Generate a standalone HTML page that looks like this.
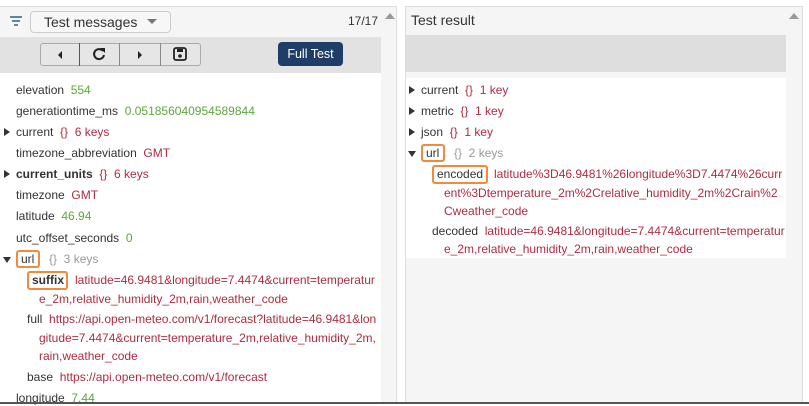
<!DOCTYPE html>
<html><head><meta charset="utf-8"><style>
*{box-sizing:border-box;margin:0;padding:0}
body{width:809px;height:404px;background:#fff;font-family:"Liberation Sans",Arial,sans-serif;font-size:12px;color:#333;position:relative;overflow:hidden}
.a{position:absolute;white-space:nowrap;line-height:16px}
.g{color:#5ba83e}.r{color:#ad2d40}.m{color:#999}
.tri{position:absolute;width:0;height:0}
.tr{border-left:6px solid #333;border-top:4px solid transparent;border-bottom:4px solid transparent}
.td{border-top:6px solid #333;border-left:4px solid transparent;border-right:4px solid transparent}
.box{position:absolute;border:2px solid #f08a3c;border-radius:3px}
</style></head><body>
<div style="position:absolute;left:0;top:6px;width:397px;height:397px;border:1px solid #ddd;border-left:none;background:#f5f5f5"></div>
<div style="position:absolute;left:0;top:7px;width:381px;height:30px;background:#f5f5f5"></div>
<div style="position:absolute;left:0;top:37px;width:381px;height:36px;background:#e2e2e2"></div>
<div style="position:absolute;left:0;top:73px;width:381px;height:330px;background:#fff"></div>
<div class="tri" style="left:385px;top:13px;border-bottom:6px solid #999;border-left:5px solid transparent;border-right:5px solid transparent"></div>
<svg style="position:absolute;left:9px;top:15px" width="14" height="12"><path d="M1 2h12M3 6h8M5 10h4" stroke="#2d5f8f" stroke-width="1.6"/></svg>
<div style="position:absolute;left:30px;top:11px;width:141px;height:22px;border:1px solid #ccc;border-radius:4px;background:#f7f7f7"></div>
<div class="a" style="left:44px;top:14px;font-size:14px">Test messages</div>
<div class="tri" style="left:147px;top:19px;border-top:5px solid #777;border-left:5px solid transparent;border-right:5px solid transparent"></div>
<div class="a" style="left:348px;top:13px">17/17</div>
<div style="position:absolute;left:40px;top:43px;width:161px;height:23px;border:1px solid #aaa;border-radius:3px;background:#e6e6e6"></div>
<div style="position:absolute;left:79px;top:43px;width:1px;height:23px;background:#555"></div>
<div style="position:absolute;left:119px;top:43px;width:1px;height:23px;background:#888"></div>
<div style="position:absolute;left:160px;top:43px;width:1px;height:23px;background:#888"></div>
<div class="tri" style="left:58px;top:51px;border-right:4px solid #222;border-top:4px solid transparent;border-bottom:4px solid transparent"></div>
<svg style="position:absolute;left:92px;top:47px" width="14" height="14"><path d="M11 4A5 5 0 1 0 12 8" fill="none" stroke="#222" stroke-width="2"/><path d="M8 1l5 0 0 5z" fill="#222"/></svg>
<div class="tri" style="left:138px;top:51px;border-left:4px solid #222;border-top:4px solid transparent;border-bottom:4px solid transparent"></div>
<svg style="position:absolute;left:173px;top:47px" width="14" height="14"><rect x="1" y="1" width="12" height="12" rx="2" fill="none" stroke="#222" stroke-width="1.8"/><rect x="4" y="2" width="6" height="3" fill="#222"/><circle cx="7" cy="9" r="1.8" fill="#222"/></svg>
<div style="position:absolute;left:278px;top:42px;width:65px;height:24px;background:#1f3d66;border-radius:4px;color:#fff;font-size:12.5px;line-height:24px;text-align:center">Full Test</div>

<div class="a" style="left:16px;top:82px">elevation <span class="g">&nbsp;554</span></div>
<div class="a" style="left:16px;top:103px">generationtime_ms <span class="g">&nbsp;0.051856040954589844</span></div>
<div class="tri tr" style="left:4px;top:128px"></div>
<div class="a" style="left:16px;top:124px">current &nbsp;<span class="r">{} &nbsp;6 keys</span></div>
<div class="a" style="left:16px;top:145px">timezone_abbreviation <span class="r">&nbsp;GMT</span></div>
<div class="tri tr" style="left:4px;top:170px"></div>
<div class="a" style="left:16px;top:166px"><b>current_units</b> &nbsp;<span class="r">{} &nbsp;6 keys</span></div>
<div class="a" style="left:16px;top:187px">timezone <span class="r">&nbsp;GMT</span></div>
<div class="a" style="left:16px;top:208px">latitude <span class="g">&nbsp;46.94</span></div>
<div class="a" style="left:16px;top:230px">utc_offset_seconds <span class="g">&nbsp;0</span></div>
<div class="tri td" style="left:3px;top:257px"></div>
<div class="box" style="left:16px;top:250px;width:24px;height:18px"></div>
<div class="a" style="left:21px;top:251px">url</div>
<div class="a m" style="left:49px;top:251px">{} &nbsp;3 keys</div>
<div class="box" style="left:27px;top:271px;width:41px;height:19px"></div>
<div class="a" style="left:32px;top:272px"><b>suffix</b></div>
<div class="a r" style="left:75px;top:272px">latitude=46.9481&amp;longitude=7.4474&amp;current=temperatur</div>
<div class="a r" style="left:39px;top:291px">e_2m,relative_humidity_2m,rain,weather_code</div>
<div class="a" style="left:27px;top:311px">full <span class="r">&nbsp;https://api.open-meteo.com/v1/forecast?latitude=46.9481&amp;lon</span></div>
<div class="a r" style="left:39px;top:330px">gitude=7.4474&amp;current=temperature_2m,relative_humidity_2m,</div>
<div class="a r" style="left:39px;top:348px">rain,weather_code</div>
<div class="a" style="left:27px;top:369px">base <span class="r">&nbsp;https://api.open-meteo.com/v1/forecast</span></div>
<div class="a" style="left:16px;top:390px">longitude <span class="g">&nbsp;7.44</span></div>

<div style="position:absolute;left:405px;top:6px;width:398px;height:397px;border:1px solid #ddd;background:#f5f5f5"></div>
<div style="position:absolute;left:406px;top:35px;width:380px;height:37px;background:#dedede"></div>
<div style="position:absolute;left:406px;top:78px;width:380px;height:180px;background:#fff"></div>
<div class="tri" style="left:789px;top:13px;border-bottom:6px solid #999;border-left:5px solid transparent;border-right:5px solid transparent"></div>
<div class="a" style="left:411px;top:12px;font-size:14px">Test result</div>
<div class="tri tr" style="left:409px;top:86px"></div>
<div class="a" style="left:421px;top:82px">current &nbsp;<span class="r">{} &nbsp;1 key</span></div>
<div class="tri tr" style="left:409px;top:107px"></div>
<div class="a" style="left:421px;top:103px">metric &nbsp;<span class="r">{} &nbsp;1 key</span></div>
<div class="tri tr" style="left:409px;top:128px"></div>
<div class="a" style="left:421px;top:124px">json &nbsp;<span class="r">{} &nbsp;1 key</span></div>
<div class="tri td" style="left:408px;top:151px"></div>
<div class="box" style="left:421px;top:144px;width:24px;height:18px"></div>
<div class="a" style="left:426px;top:145px">url</div>
<div class="a m" style="left:454px;top:145px">{} &nbsp;2 keys</div>
<div class="box" style="left:432px;top:165px;width:56px;height:19px"></div>
<div class="a" style="left:437px;top:166px">encoded</div>
<div class="a r" style="left:494px;top:166px">latitude%3D46.9481%26longitude%3D7.4474%26curr</div>
<div class="a r" style="left:444px;top:185px">ent%3Dtemperature_2m%2Crelative_humidity_2m%2Crain%2</div>
<div class="a r" style="left:444px;top:203px">Cweather_code</div>
<div class="a" style="left:432px;top:223px">decoded <span class="r">&nbsp;latitude=46.9481&amp;longitude=7.4474&amp;current=temperatur</span></div>
<div class="a r" style="left:444px;top:241px">e_2m,relative_humidity_2m,rain,weather_code</div>
<div style="position:absolute;left:0;top:402px;width:809px;height:2px;background:#555"></div>
</body></html>
